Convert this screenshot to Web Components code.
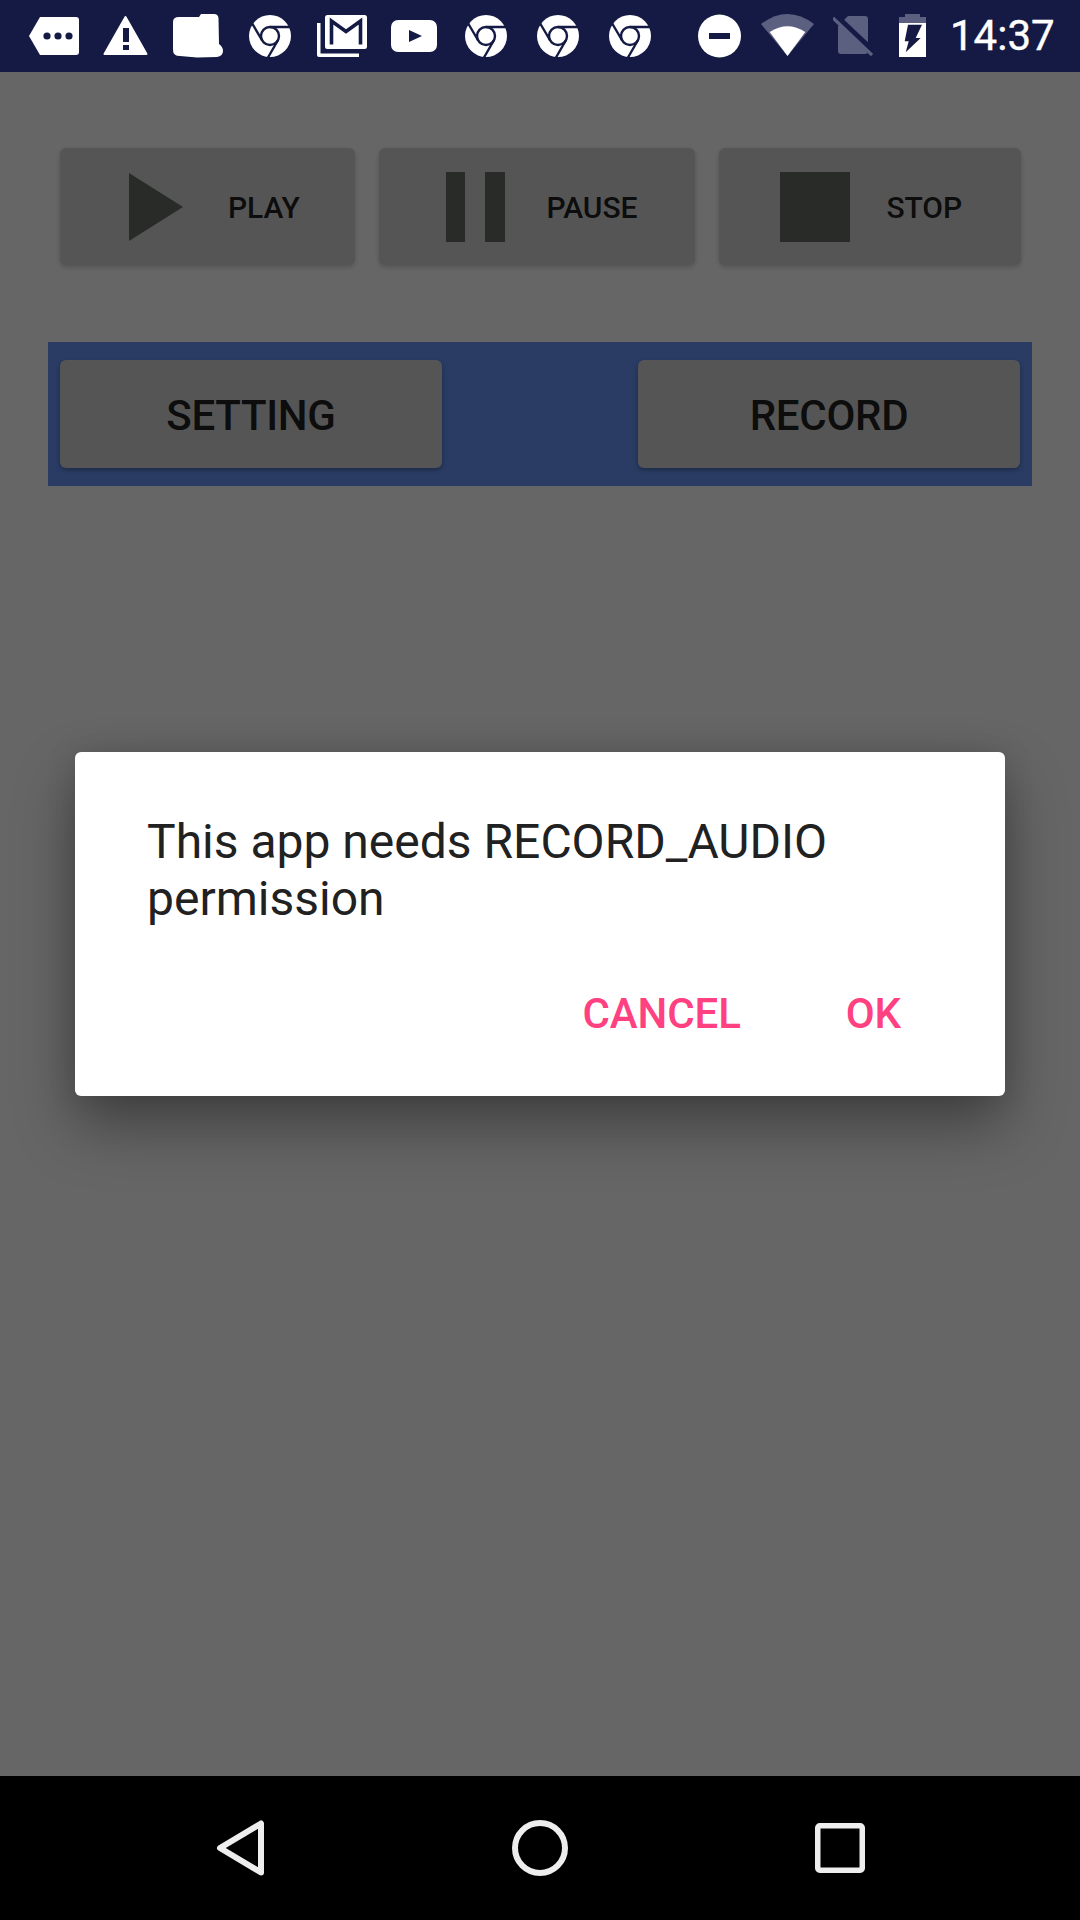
<!DOCTYPE html>
<html>
<head>
<meta charset="utf-8">
<title>Recorder</title>
<style>
  html, body { margin: 0; padding: 0; background: #000; }
  body { font-family: Roboto, "Noto Sans", sans-serif; }
</style>
</head>
<body>
<app-screen>
  <status-bar slot="status"></status-bar>

  <transport-row>
    <transport-button style="--w:295.5px; --pad:69.5px; --gap:45px" label="PLAY">
      <svg slot="icon" width="54" height="68" viewBox="0 0 54 68"><path d="M0 0 L54 34 L0 68Z" fill="#666b68"/></svg>
    </transport-button>
    <transport-button style="--w:316px; --pad:66.5px; --gap:42px" label="PAUSE">
      <svg slot="icon" width="59" height="70" viewBox="0 0 59 70"><path d="M0 0H19V70H0Z M39 0H59V70H39Z" fill="#666b68"/></svg>
    </transport-button>
    <transport-button style="--w:301.5px; --pad:60.5px; --gap:37px" label="STOP">
      <svg slot="icon" width="70" height="70" viewBox="0 0 70 70"><rect width="70" height="70" fill="#666b68"/></svg>
    </transport-button>
  </transport-row>

  <tool-bar>
    <tool-button>SETTING</tool-button>
    <tool-button>RECORD</tool-button>
  </tool-bar>

  <permission-dialog slot="overlay">
    This app needs RECORD_AUDIO permission
    <dialog-action slot="actions">CANCEL</dialog-action>
    <dialog-action slot="actions">OK</dialog-action>
  </permission-dialog>

  <nav-bar slot="nav"></nav-bar>
</app-screen>

<script>
const NAVY = "#141a44";
const DIM = "#5b5f80";

const chrome = `
  <circle cx="21" cy="21" r="21" fill="#fff"/>
  <g fill="none" stroke="${NAVY}" stroke-width="2.4">
    <circle cx="21" cy="21" r="9"/>
    <path d="M21 12H41 M28.8 25.5L19 42.5 M13.2 25.5L3.2 8.5"/>
  </g>`;

// w = box width, y = top of the drawing inside the 48px tall row
const ICONS = {
  tag: { w: 50, y: 5, d: `
    <path d="M11 0H47a3 3 0 0 1 3 3V35a3 3 0 0 1-3 3H11L0 19Z" fill="#fff"/>
    <circle cx="18" cy="19" r="3.6" fill="${NAVY}"/>
    <circle cx="29" cy="19" r="3.6" fill="${NAVY}"/>
    <circle cx="40" cy="19" r="3.6" fill="${NAVY}"/>` },
  warning: { w: 45, y: 3, d: `
    <path d="M22.5 2L43.5 39H1.5Z" fill="#fff" stroke="#fff" stroke-width="2" stroke-linejoin="round"/>
    <path d="M20 13H26V27H20Z M20 30H26V35H20Z" fill="${NAVY}"/>` },
  blob: { w: 50, y: 2, d: `
    <path d="M6 3H26L28 0H41Q45 0 45.5 4L46 30Q50 33 50 37Q50 42 44 43L24 43.5L7 42Q0 42 0 36V8Q0 3 6 3Z" fill="#fff"/>` },
  chrome: { w: 42, y: 3, d: chrome },
  gmail: { w: 50, y: 3, d: `
    <path d="M0 8H3.5V38.5H42V42H2a2 2 0 0 1-2-2Z" fill="#fff"/>
    <rect x="8" width="42" height="34" rx="2.5" fill="#fff"/>
    <path d="M14.5 29.5V6L29 16.5L43.5 6V29.5" fill="none" stroke="${NAVY}" stroke-width="3.6"/>` },
  youtube: { w: 46, y: 8, d: `
    <rect width="46" height="32" rx="7" fill="#fff"/>
    <path d="M18 10L31 16L18 22Z" fill="${NAVY}"/>` },
  dnd: { w: 43, y: 2.5, d: `
    <circle cx="21.5" cy="21.5" r="21.5" fill="#fff"/>
    <rect x="11" y="18.5" width="21" height="6" fill="${NAVY}"/>` },
  wifi: { w: 53, y: 2, d: `
    <path d="M0 10Q26.5 -10 53 10L26.5 42Z" fill="${DIM}"/>
    <path d="M8.7 18Q26.5 6.5 44.3 18L26.5 42Z" fill="#fff"/>` },
  sim: { w: 40, y: 2, d: `
    <path d="M15 2H32a3 3 0 0 1 3 3V37a3 3 0 0 1-3 3H8a3 3 0 0 1-3-3V12Z" fill="${DIM}"/>
    <path d="M1 1L38 36" stroke="${NAVY}" stroke-width="7"/>
    <path d="M0 4L39 41" stroke="${DIM}" stroke-width="3.2"/>` },
  battery: { w: 27, y: 2, d: `
    <path d="M6 0H21V3H27V9H0V3H6Z" fill="${DIM}"/>
    <path d="M0 9H27V43H0Z" fill="#fff"/>
    <path d="M9 10.7H23L16.7 24H21.7L6.7 38.3L9.7 27.3H5.7Z" fill="${NAVY}"/>` }
};

class AppScreen extends HTMLElement {
  constructor() {
    super();
    this.attachShadow({ mode: "open" }).innerHTML = `
      <style>
        :host { display: flex; flex-direction: column; width: 1080px; height: 1920px; overflow: hidden; }
        main { flex: 1; position: relative; background: #fff; display: flex; flex-direction: column; }
      </style>
      <slot name="status"></slot>
      <main><slot></slot><slot name="overlay"></slot></main>
      <slot name="nav"></slot>`;
  }
}

class StatusIcon extends HTMLElement {
  constructor() {
    super();
    const icon = ICONS[this.getAttribute("name")];
    this.attachShadow({ mode: "open" }).innerHTML = `
      <style>:host { display: block; height: 48px; } svg { display: block; }</style>
      <svg width="${icon.w}" height="48" viewBox="0 ${-icon.y} ${icon.w} 48">${icon.d}</svg>`;
  }
}

class StatusBar extends HTMLElement {
  constructor() {
    super();
    const row = [
      ["tag", 0], ["warning", 24], ["blob", 25], ["chrome", 26], ["gmail", 26], ["youtube", 24],
      ["chrome", 28], ["chrome", 30], ["chrome", 30], ["dnd", 47], ["wifi", 20], ["sim", 19], ["battery", 26]
    ];
    this.attachShadow({ mode: "open" }).innerHTML = `
      <style>
        :host { display: flex; align-items: center; height: 72px; box-sizing: border-box; padding-left: 29px; background: ${NAVY}; color: #fff; }
        .time { margin-left: 24px; font: 400 42px/48px Roboto, sans-serif; -webkit-text-stroke: .4px #fff; }
      </style>
      ${row.map(([name, gap]) => `<status-icon name="${name}" style="margin-left:${gap}px"></status-icon>`).join("")}
      <span class="time">14:37</span>`;
  }
}

class TransportRow extends HTMLElement {
  constructor() {
    super();
    this.attachShadow({ mode: "open" }).innerHTML = `
      <style>:host { display: flex; gap: 24px; margin: 76px 0 0 59.5px; }</style>
      <slot></slot>`;
  }
}

class TransportButton extends HTMLElement {
  constructor() {
    super();
    this.attachShadow({ mode: "open" }).innerHTML = `
      <style>
        :host {
          display: flex; align-items: center; gap: var(--gap); box-sizing: border-box;
          width: var(--w); height: 117px; padding-left: var(--pad);
          background: #d4d4d4; border-radius: 6px;
          box-shadow: 0 2px 5px rgba(0,0,0,.2);
          font: 500 30px Roboto, sans-serif; color: rgba(0,0,0,.87);
        }
        ::slotted(svg) { display: block; flex: none; filter: blur(.7px); }
        span { position: relative; top: 1px; letter-spacing: -.1px; }
      </style>
      <slot name="icon"></slot><span>${this.getAttribute("label")}</span>`;
  }
}

class ToolBar extends HTMLElement {
  constructor() {
    super();
    this.attachShadow({ mode: "open" }).innerHTML = `
      <style>
        :host {
          display: flex; justify-content: space-between; box-sizing: border-box;
          width: 984px; height: 144px; margin: 77px 0 0 48px; padding: 18px 12px;
          background: #6996fa;
        }
      </style>
      <slot></slot>`;
  }
}

class ToolButton extends HTMLElement {
  constructor() {
    super();
    this.attachShadow({ mode: "open" }).innerHTML = `
      <style>
        :host {
          display: flex; align-items: center; justify-content: center;
          width: 382px; height: 108px; padding-top: 2px; box-sizing: border-box;
          background: #d4d4d4; border-radius: 6px;
          box-shadow: 0 2px 5px rgba(0,0,0,.3);
          font: 500 42px Roboto, sans-serif; letter-spacing: -.3px; color: rgba(0,0,0,.87);
        }
      </style>
      <slot></slot>`;
  }
}

class PermissionDialog extends HTMLElement {
  constructor() {
    super();
    this.attachShadow({ mode: "open" }).innerHTML = `
      <style>
        :host {
          position: absolute; inset: 0;
          display: flex; align-items: center; justify-content: center;
          background: rgba(0,0,0,.6);
        }
        .card {
          box-sizing: border-box; width: 930px; height: 344px; padding: 61px 72px 0;
          background: #fff; border-radius: 6px;
          box-shadow: 0 30px 60px rgba(0,0,0,.36), 0 0 30px rgba(0,0,0,.12);
        }
        .msg { font: 400 48px/57px Roboto, sans-serif; color: #212121; }
        .actions { display: flex; justify-content: flex-end; gap: 105px; margin: 60px 32px 0 0; }
      </style>
      <div class="card">
        <div class="msg"><slot></slot></div>
        <div class="actions"><slot name="actions"></slot></div>
      </div>`;
  }
}

class DialogAction extends HTMLElement {
  constructor() {
    super();
    this.attachShadow({ mode: "open" }).innerHTML = `
      <style>:host { display: block; font: 500 42px/54px Roboto, sans-serif; letter-spacing: -.1px; color: #ff4081; }</style>
      <slot></slot>`;
  }
}

class NavBar extends HTMLElement {
  constructor() {
    super();
    this.attachShadow({ mode: "open" }).innerHTML = `
      <style>
        :host { display: grid; grid-template-columns: repeat(3, 1fr); align-items: center; justify-items: center;
                height: 144px; padding: 0 90px; background: #000; }
        svg { display: block; }
      </style>
      <svg width="48" height="56" viewBox="0 0 48 56" fill="none" stroke="#eee" stroke-width="6" stroke-linejoin="round">
        <path d="M4 28L45 3.5V52.5Z"/>
      </svg>
      <svg width="56" height="56" viewBox="0 0 56 56" fill="none" stroke="#eee" stroke-width="6">
        <circle cx="28" cy="28" r="25"/>
      </svg>
      <svg width="50" height="50" viewBox="0 0 50 50" fill="none" stroke="#eee" stroke-width="5.5">
        <rect x="2.75" y="2.75" width="44.5" height="44.5" rx="2"/>
      </svg>`;
  }
}

customElements.define("app-screen", AppScreen);
customElements.define("status-icon", StatusIcon);
customElements.define("status-bar", StatusBar);
customElements.define("transport-row", TransportRow);
customElements.define("transport-button", TransportButton);
customElements.define("tool-bar", ToolBar);
customElements.define("tool-button", ToolButton);
customElements.define("permission-dialog", PermissionDialog);
customElements.define("dialog-action", DialogAction);
customElements.define("nav-bar", NavBar);
</script>
</body>
</html>
